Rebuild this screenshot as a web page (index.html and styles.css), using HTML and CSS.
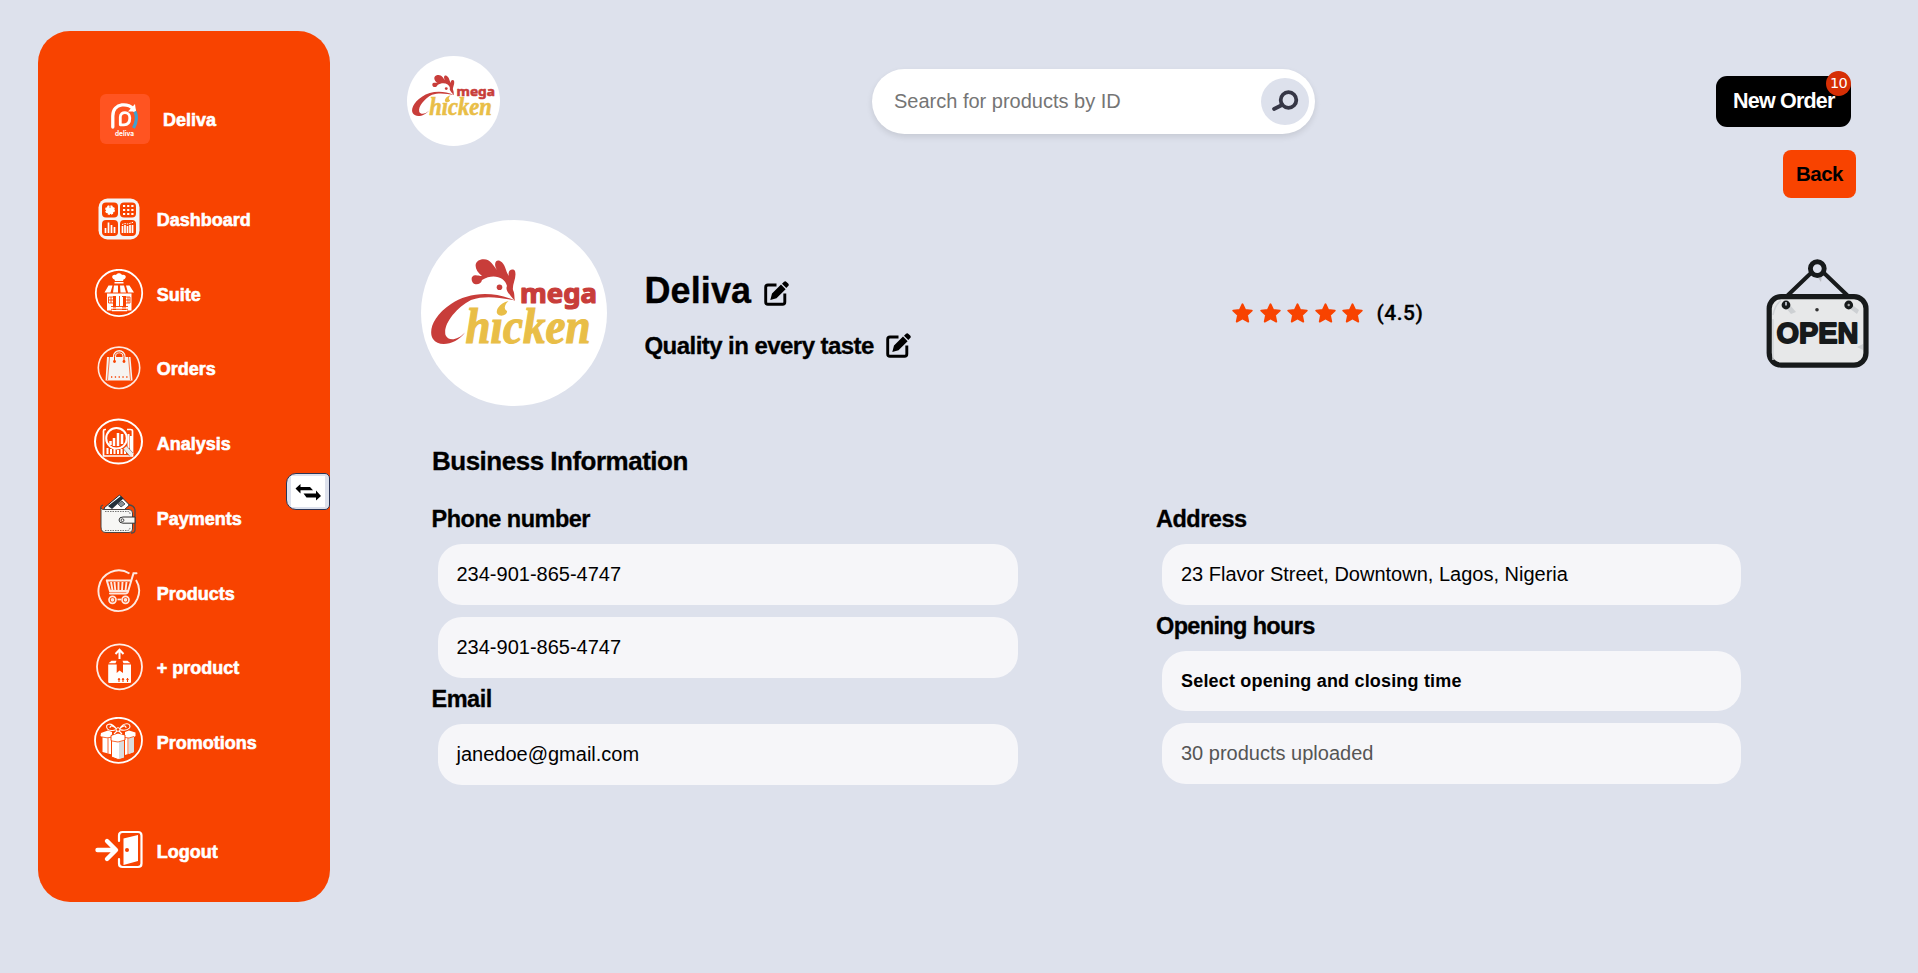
FILE: index.html
```html
<!DOCTYPE html>
<html lang="en">
<head>
<meta charset="utf-8">
<title>Deliva</title>
<link rel="stylesheet" href="styles.css">
</head>
<body>
<svg class="defs" width="0" height="0">
  <symbol id="mega" class="mega" viewBox="0 0 186 186" preserveAspectRatio="none">
    <ellipse cx="93" cy="93" rx="93" ry="93" fill="#fff"/>
    <g fill="#c83d3a">
      <path d="M94 80.500C70 70 46 73 30 84C12 96 7 111 12 119C18 128 36 124 44 112.500C36 121 27 121 24.500 115C22 104 35 88 50 80C65 75 80 78 94 80.500Z"/>
      <path d="M52 63C49 59 51 54 56 55.500C58 55.500 59 56 61 56C53 50 52 41 61 39.300C69 38 72 45 76 50C72 44 75 39 79 41C85 44 84 51 88 56C86 50 92 48 94 51C96 58 91 64 92 70C94 74 93 77 94 81C88 74 84 70 86 66C84 57 72 53 61 60C60 65 54 65 52 63Z"/>
      <circle cx="78.500" cy="67.300" r="2.800"/>
      <text x="99" y="82.500" textLength="77" lengthAdjust="spacingAndGlyphs" class="mega-top">mega</text>
    </g>
    <g fill="#e9be47">
      <path d="M87.500 81C78 83 74 91 76.500 94C80 98 87 94 86 91C82 89 84 84 87.500 81Z"/>
      <text x="44.500" y="122.500" textLength="125" lengthAdjust="spacingAndGlyphs" class="mega-bottom">h&#305;cken</text>
    </g>
  </symbol>
  <symbol id="edit" viewBox="0 0 25 25">
    <path d="M12.500 4H4Q1.700 4 1.700 6.300V21Q1.700 23.300 4 23.300H18.500Q20.800 23.300 20.800 21V12.500" fill="none" stroke="#000" stroke-width="2.900"/>
    <path d="M6.300 19L8 12.600L17 3.600L21.600 8.200L12.500 17.300ZM18 2.800L20 .800Q21.300-.300 22.500.900L24.200 2.600Q25.400 3.900 24.200 5.100L22.300 7.100Z"/>
  </symbol>
  <symbol id="star" viewBox="0 0 21 20">
    <path d="M10.500 1.200L13.200 6.800L19.800 7.600L15 12.100L16.300 18.600L10.500 15.500L4.700 18.600L6 12.100L1.200 7.600L7.800 6.800Z" fill="#f84300" stroke="#f84300" stroke-width="1.800" stroke-linejoin="round"/>
  </symbol>
</svg>

<div class="page">
  <aside class="sidebar">
    <div class="brand">
      <svg class="brand-logo" width="50" height="50" viewBox="0 0 50 50">
        <rect width="50" height="50" rx="6" fill="#ff5421"/>
        <path d="M12.800 33V22C12.800 8 30 8.500 34 16" fill="none" stroke="#fff" stroke-width="3.300" stroke-linecap="round"/>
        <path d="M28 17.500L36 17.500L35 10Z" fill="#fff"/>
        <path d="M20.300 30.800V23C20.300 17 29.800 17 29.800 24C29.800 29 27 30.800 24 30.800Z" fill="none" stroke="#fff" stroke-width="2.800" stroke-linejoin="round"/>
        <path d="M35 17.500Q38.500 25 33.500 34" fill="none" stroke="#3fa0cf" stroke-width="3.200"/>
        <text x="15" y="42" textLength="19" lengthAdjust="spacingAndGlyphs" class="brand-mini">deliva</text>
      </svg>
      <span>Deliva</span>
    </div>
    <nav class="nav">
      <a class="nav-item">
        <svg class="icon" viewBox="0 0 50 50">
          <rect x="4.500" y="4.500" width="41" height="41" rx="9" fill="#f4f4f6"/>
          <g fill="#f84300"><rect x="8" y="8.500" width="16" height="15" rx="4"/><rect x="26" y="8.500" width="16" height="15" rx="4"/><rect x="8" y="26" width="16" height="16" rx="4"/><rect x="26" y="26" width="16" height="16" rx="4"/></g>
          <circle cx="16" cy="16" r="4" fill="#fff" stroke="#fff" stroke-width="1.800" stroke-dasharray="2 1.140"/>
          <path d="M16 12v2" stroke="#f84300" stroke-width=".800"/>
          <path d="M29 12h10.500M29 16h10.500M29 20h10.500" stroke="#fff" stroke-width="2.200" stroke-dasharray="2.200 1.950"/>
          <path d="M11.500 39v-5M14.500 39V28.500M17.500 39v-8M20.500 39v-6M28.500 39v-7M31 39v-8M33.500 39v-7M36 39v-8M38.500 39v-8" stroke="#fff" stroke-width="1.700"/>
          <path d="M28 30.500l3-1 3 .500 6-2" stroke="#fff" stroke-dasharray="1.500 1" fill="none"/>
        </svg><span>Dashboard</span></a>
      <a class="nav-item">
        <svg class="icon" viewBox="0 0 50 50">
          <circle cx="25" cy="24" r="23.200" fill="none" stroke="#fff" stroke-width="1.800"/>
          <g fill="#fff">
            <path d="M20.500 10.500C16 8.500 19 4.500 22 6C23 3.500 27 3.500 28 6C31 4.500 34 8.500 29.500 10.500L29 12H21ZM20.500 13h9v1.500h-9Z"/>
            <path d="M14.500 16.500h4l-2 7h-6ZM20 16.500h4v7h-5ZM26 16.500h4l2 7h-5.500ZM32 16.500h3.500l4.500 7h-6Z"/>
            <path d="M13 24.500h24.500v17H32V27h-4v14.500h-6V27h-3v14.500h-6Z"/>
            <path d="M22 28h7v9h-7ZM17 38.500h17v1.200H17ZM18 41h15v1.200H18Z"/>
          </g>
          <path d="M14.500 28h5v6h-5ZM31.500 28h4.500v6h-4.500ZM17 28v6M14.500 31h5M34 28v6M31.500 31h4.500M25.500 27v10M21.500 27v10M30 27v10M17 37.500h17M17 40.300h17" stroke="#f84300" fill="none" stroke-width=".900"/>
        </svg><span>Suite</span></a>
      <a class="nav-item">
        <svg class="icon" viewBox="0 0 50 50">
          <circle cx="25" cy="24.800" r="20.700" fill="none" stroke="#ffe9e0" stroke-width="1.600"/>
          <path d="M13 14h23.500L38.500 37.500h-27Z" fill="#f6f3f1"/>
          <path d="M15.500 14L13.500 37M34.500 14L36.500 37" stroke="#f84300" stroke-width=".700"/>
          <path d="M20.500 18V13.500C20.500 7 30 7 30 13.500V18" stroke="#f6f3f1" stroke-width="3.200" fill="none"/>
          <path d="M20.500 19V13.500C20.500 7.500 30 7.500 30 13.500V19" stroke="#f84300" stroke-width="1" fill="none"/>
          <path d="M17 34h17" stroke="#f84300" stroke-width="1.300" stroke-dasharray="1.300 2.500"/>
          <circle cx="20.500" cy="18.500" r="1.400" fill="#f84300"/><circle cx="30" cy="18.500" r="1.400" fill="#f84300"/>
        </svg><span>Orders</span></a>
      <a class="nav-item">
        <svg class="icon" viewBox="0 0 50 50">
          <ellipse cx="24.500" cy="23.500" rx="23.500" ry="22.100" fill="none" stroke="#fff" stroke-width="2"/>
          <path d="M12 11.500H11Q9.500 11.500 9.500 13V38H38.500V13Q38.500 11.500 36.500 11.500H33" fill="none" stroke="#fff" stroke-width="1.700"/>
          <path d="M13.500 36v-6M17 36v-5M20.500 36v-5M24 36v-4M27.500 36v-5M31 36v-4M34.500 30V16M37 34V18" stroke="#fff" stroke-width="2"/>
          <circle cx="22.500" cy="20.300" r="10.300" fill="#f84300" stroke="#fff" stroke-width="2"/>
          <path d="M16.500 27v-4M20 28v-8M24 28V15M28 26V16" stroke="#fff" stroke-width="2.500"/>
          <path d="M31 29.500L38 37" stroke="#eee" stroke-width="4.500"/><path d="M29.500 31L36 38.500M32.500 28l6.500 7" stroke="#555" stroke-width=".500"/>
        </svg><span>Analysis</span></a>
      <a class="nav-item">
        <svg class="icon" viewBox="0 0 50 50">
          <path d="M10 15L25.500 2L35.500 12L30 17H11Z" fill="#fff" stroke="#273038" stroke-width="1"/>
          <path d="M14 13L27 3l2.500 2.500L18 16Z" fill="#22303a"/><path d="M24 11l4-3 3 3-4 3Z" fill="#8b9297" stroke="#22303a" stroke-width=".700"/>
          <path d="M9 12Q6 13 7 16M34 12Q41 12 41 18V37Q41 40 37 40" stroke="#4b4b4b" stroke-width="1.300" fill="none"/>
          <path d="M7 15Q8 17 11 16.500H35Q38.500 16.500 38.500 20V36Q38.500 39.500 35 39.500H12Q7 39.500 7 34Z" fill="#f7f7f5" stroke="#4b4542" stroke-width="1"/>
          <path d="M11 18.500H34Q36 18.500 36 21M11 37.500H34Q36 37 36 34" stroke="#555" stroke-width=".800" stroke-dasharray="1.500 1" fill="none"/>
          <path d="M41 24H29Q25 24 25 27T29 30.200H41Z" fill="#f7f7f5" stroke="#333" stroke-width="1"/><circle cx="28.500" cy="27.200" r="1.400" fill="#fff" stroke="#333" stroke-width=".900"/>
        </svg><span>Payments</span></a>
      <a class="nav-item">
        <svg class="icon" viewBox="0 0 50 50">
          <path d="M35.500 5.500A20.300 20.300 0 1 0 42 12" fill="none" stroke="#ffe9e0" stroke-width="1.900"/>
          <path d="M42.500 5.300H39.500L34 23.500Q33.500 25.500 31.500 25.500H16M13 12.500H36M12.800 12.500L16 23H34" fill="none" stroke="#ffe9e0" stroke-width="2" stroke-linecap="round"/>
          <path d="M17 14l1.500 8.500M20.500 14l.800 8.500M24.500 14v8.500M28.500 14l-.500 8.500M32.500 14l-1 8.500" stroke="#ffe9e0" stroke-width="1.900"/>
          <g fill="none" stroke="#ffe9e0" stroke-width="1.700"><circle cx="18.500" cy="31.800" r="3.500"/><circle cx="18.500" cy="31.800" r="1"/><circle cx="31.500" cy="31.800" r="3.500"/><circle cx="31.500" cy="31.800" r="1"/><path d="M23.500 31.500h3.500"/></g>
        </svg><span>Products</span></a>
      <a class="nav-item">
        <svg class="icon" viewBox="0 0 50 50">
          <circle cx="25.500" cy="24.800" r="22.500" fill="none" stroke="#ffeee8" stroke-width="1.800"/>
          <path d="M25.500 17V8M21.500 12l4-4.200 4 4.200" fill="none" stroke="#fff" stroke-width="2"/>
          <path d="M17.500 18.800h5l-1 2.500h-7ZM28.500 18.800h5l3 2.500h-7ZM14.200 22.500h8.500V31l2.800-2.500L29 31v-8.500h8V40Q37 41 36 41H15.200Q14.200 41 14.200 40Z" fill="#fffdfb"/>
          <path d="M25 40v-4M29 40v-4M33.500 40v-4" stroke="#f84300" stroke-width="1.100"/><path d="M23.500 38l1.500-2 1.500 2ZM27.500 38l1.500-2 1.500 2ZM32 38l1.500-2 1.500 2Z" fill="#f84300"/>
        </svg><span>+ product</span></a>
      <a class="nav-item">
        <svg class="icon" viewBox="0 0 50 50">
          <ellipse cx="24.500" cy="23.300" rx="23.500" ry="22.500" fill="none" stroke="#fff" stroke-width="1.800"/>
          <path d="M7 16L14 13.500L18 15L18 37.500L8.500 35V20L6.500 19ZM31 15L35 13.500L41.500 15.500V19L40 20V35L31 38Z" fill="#fff"/>
          <path d="M17 18.500L24 16L31 18V23L30 24V41L24 42.500L17.500 40V24L17 23Z" fill="#fff" stroke="#f84300" stroke-width="1"/>
          <path d="M25 25l5-1.500V40.500L25 42ZM35 21l5-1.500V35L35 37Z" fill="#d9dde0"/>
          <path d="M17 23.800l7 1.200 7-2M8 20l5 .800 4-.500M31 20.500l4 .500 5-1.500M14 21v15.500M34 21v16" stroke="#f84300" stroke-width=".800" fill="none"/>
          <path d="M23 12.500C17 4 10 7 13.500 12C16 15 20 13 23 12.500C19 8 16 8 16 11M25 12.500C30 4 38 6 35.500 11C32 15 28 13 25 12.500C29 8 32 8 32 11M24 13l-4 4M24 13l4 4" fill="none" stroke="#fff" stroke-width="1.100"/>
          <circle cx="24" cy="12.500" r="1.800" fill="#f84300" stroke="#fff"/>
        </svg><span>Promotions</span></a>
      <a class="nav-item logout">
        <svg class="icon" viewBox="0 0 50 50">
          <path d="M3.500 24H21M13 15L22 24L13 33" fill="none" stroke="#fff" stroke-width="4.400" stroke-linecap="round" stroke-linejoin="round"/>
          <path d="M25 15V9.500Q25 6 28.500 6H44Q47.500 6 47.500 9.500V37.500Q47.500 41 44 41H28.500Q25 41 25 37.500V33" fill="none" stroke="#fff" stroke-width="2.200" stroke-linecap="round"/>
          <path d="M29.500 12.500L44 9V35L29.500 39Z" fill="#fff"/><circle cx="33" cy="24" r="2" fill="#f84300"/>
        </svg><span>Logout</span></a>
    </nav>
    <button class="toggle" aria-label="Toggle menu">
      <svg width="34" height="31" viewBox="0 0 34 31"><rect width="34" height="31" fill="#fff"/><path d="M4.500 12.500L9.500 8V11H19L22 14.300H9.500V17.500ZM30 20L25 24.500V21.500H15.500L12.500 17.500H25V14.500Z"/></svg>
    </button>
  </aside>

  <main class="main">
    <header class="header">
      <svg class="header-logo" preserveAspectRatio="none"><use href="#mega" width="93" height="90"/></svg>
      <div class="search">
        <input class="search-input" type="text" placeholder="Search for products by ID">
        <span class="search-btn"><svg width="48" height="47" viewBox="0 0 48 47" fill="none" stroke="#363746" stroke-width="3.800"><circle cx="27.500" cy="22" r="7.800"/><path d="M21 27L13 31" stroke-linecap="round"/></svg></span>
      </div>
      <div class="new-order">New Order<span class="badge">10</span></div>
    </header>
    <div class="back">Back</div>

    <section class="profile">
      <svg class="avatar"><use href="#mega" width="186" height="186"/></svg>
      <div class="info">
        <div class="name"><span>Deliva</span><svg class="edit edit-name"><use href="#edit"/></svg></div>
        <div class="motto"><span>Quality in every taste</span><svg class="edit"><use href="#edit"/></svg></div>
      </div>
      <div class="rating">
        <svg class="star"><use href="#star"/></svg><svg class="star"><use href="#star"/></svg><svg class="star"><use href="#star"/></svg><svg class="star"><use href="#star"/></svg><svg class="star"><use href="#star"/></svg>
        <span class="score">(4.5)</span>
      </div>
      <svg class="sign" viewBox="0 0 103 110">
        <path d="M45 14L21 37M58 14L82 37" stroke="#171a1b" stroke-width="4"/>
        <path d="M50 16l5 7 1-8Z" fill="#b9bcc1"/>
        <circle cx="51.300" cy="9.600" r="6.900" fill="#dde1ec" stroke="#171a1b" stroke-width="4.900"/>
        <rect x="3.200" y="37.600" width="96.800" height="68.500" rx="12" fill="#e7e8e9" stroke="#171a1b" stroke-width="5.200"/>
        <path d="M7 56Q9 46 15 41.500M7 60V101" stroke="#cfd2d6" fill="none" stroke-width="1.500"/>
        <path d="M20 49l5 6 5-2-7-8ZM83 49l8 6 2-4-8-6ZM91 88l6 3V85Z" fill="#cdd0d3"/>
        <circle cx="20" cy="46" r="4.400" fill="#171a1b"/><path d="M20 43v3.500" stroke="#dde1ec" stroke-width="1.500"/>
        <circle cx="82.700" cy="46" r="4.400" fill="#171a1b"/><circle cx="82.700" cy="46" r="1.200" fill="#aaa"/>
        <circle cx="51" cy="50.700" r="1.800" fill="#333"/>
        <text x="10.500" y="83.500" textLength="82" lengthAdjust="spacingAndGlyphs" class="sign-text">OPEN</text>
      </svg>
    </section>

    <h2 class="section-title">Business Information</h2>
    <section class="fields">
      <div class="column">
        <h3 class="label">Phone number</h3>
        <div class="field">234-901-865-4747</div>
        <div class="field">234-901-865-4747</div>
        <h3 class="label">Email</h3>
        <div class="field">janedoe@gmail.com</div>
      </div>
      <div class="column">
        <h3 class="label">Address</h3>
        <div class="field">23 Flavor Street, Downtown, Lagos, Nigeria</div>
        <h3 class="label label-hours">Opening hours</h3>
        <div class="field field-hours">Select opening and closing time</div>
        <div class="field field-muted">30 products uploaded</div>
      </div>
    </section>
  </main>
</div>
</body>
</html>
```
FILE: styles.css
```css
* { box-sizing: border-box; }
body {
  margin: 0;
  background: #dde1ec;
  color: #000;
  font-family: "Liberation Sans", Arial, sans-serif;
}
.defs { position: absolute; }
svg { display: block; flex: none; }
.page { display: flex; height: 973px; overflow: hidden; padding: 31px 62px 0 38px; }

.sidebar {
  position: relative;
  flex: none;
  width: 292px;
  height: 871px;
  padding: 63px 0 0 56px;
  border-radius: 32px;
  background: #f84300;
  color: #fff;
  font-size: 18px;
  font-weight: 700;
  -webkit-text-stroke: 0.6px #fff;
}
.brand { display: flex; align-items: center; gap: 13px; padding-left: 6px; }
.brand span { padding-top: 2px; }
.brand-logo { -webkit-text-stroke: 0; }
.brand-mini { font: 700 7px Inter, sans-serif; fill: #fff; }
.nav { display: flex; flex-direction: column; padding-top: 37.5px; }
.nav-item { display: flex; align-items: center; gap: 12.7px; height: 74.75px; }
.nav-item span { padding-top: 3px; }
.icon { width: 50px; height: 50px; }
.logout { margin-top: 34.5px; }
.toggle {
  position: absolute;
  right: 0;
  top: 442px;
  width: 44px;
  height: 37px;
  display: flex;
  align-items: center;
  justify-content: center;
  padding: 0;
  border: 1px solid #2b3556;
  border-radius: 10px 5px 5px 10px;
  background: #dde1ec;
}

.main { flex: 1; display: flex; flex-direction: column; padding-top: 25px; }
.header { display: flex; align-items: center; height: 90px; padding-left: 77px; }
.header-logo { width: 93px; height: 90px; overflow: visible; }
.search {
  display: flex;
  align-items: center;
  width: 443px;
  height: 65px;
  margin-left: 372px;
  padding: 0 6px 0 22px;
  border-radius: 33px;
  background: #fff;
  box-shadow: 0 3px 6px rgba(0, 0, 0, 0.1);
}
.search-input {
  flex: 1;
  min-width: 0;
  padding: 0;
  border: 0;
  outline: 0;
  background: none;
  font: 20px "Liberation Sans", Arial, sans-serif;
}
.search-input::placeholder { color: #757575; }
.search-btn { width: 48px; height: 47px; border-radius: 50%; background: #dde1ec; }
.new-order {
  position: relative;
  width: 135px;
  height: 51px;
  margin-left: 401px;
  padding-left: 17px;
  border-radius: 11px;
  background: #000;
  color: #fff;
  font-size: 21.5px;
  font-weight: 700;
  line-height: 51px;
  letter-spacing: -0.8px;
  white-space: nowrap;
}
.badge {
  position: absolute;
  top: -5px;
  right: 0;
  width: 25px;
  height: 25px;
  border-radius: 50%;
  background: #d62f05;
  font: 14.5px/25px "DejaVu Sans", sans-serif;
  letter-spacing: -0.8px;
  text-align: center;
}
.back {
  align-self: flex-end;
  width: 73px;
  height: 48px;
  margin-top: 4px;
  border-radius: 8px;
  background: #f84300;
  font-size: 20.5px;
  font-weight: 700;
  line-height: 48px;
  letter-spacing: -0.5px;
  text-align: center;
}

.profile { display: flex; align-items: center; height: 186px; margin: 21.5px -13px 0 91px; }
.avatar { width: 186px; height: 186px; overflow: visible; }
.info { width: 588px; padding-left: 37.5px; padding-top: 4px; font-weight: 700; -webkit-text-stroke: 0.3px #000; }
.name, .motto { display: flex; align-items: center; white-space: nowrap; }
.name { gap: 13px; font-size: 36px; line-height: 44px; letter-spacing: 0.1px; }
.motto { gap: 12.5px; margin-top: 18px; font-size: 24px; line-height: 30px; letter-spacing: -0.55px; }
.edit { width: 25px; height: 25px; }
.edit-name { margin-top: 6px; }
.rating { display: flex; align-items: center; gap: 6.5px; margin-left: 37px; }
.star { width: 21px; height: 20px; }
.score { margin-left: 7px; font: 500 21px Roboto, sans-serif; letter-spacing: 0.5px; -webkit-text-stroke: 0.3px #000; }
.sign { width: 103px; height: 110px; margin-top: 3px; margin-left: auto; }
.mega { overflow: visible; }
.mega-top { font: 700 27px "Noto Sans", sans-serif; stroke: #c83d3a; stroke-width: 1.2; stroke-linejoin: round; }
.mega-bottom { font: italic 700 50px "Liberation Serif", serif; stroke: #e9be47; stroke-width: 1.2; }
.sign-text { font: 700 30px "Liberation Sans", sans-serif; fill: #171a1b; stroke: #171a1b; stroke-width: 1.8; stroke-linejoin: round; }

.section-title { margin: 39.5px 0 0 102px; font-size: 26px; line-height: 32px; letter-spacing: -0.5px; -webkit-text-stroke: 0.3px #000; }
.fields { display: grid; grid-template-columns: 586px 585px; column-gap: 138.5px; margin: 27.5px 0 0 101.5px; }
.column { display: flex; flex-direction: column; }
.label { margin: 0 0 11.5px; font-size: 23.5px; line-height: 28px; letter-spacing: -0.5px; -webkit-text-stroke: 0.3px #000; }
.field {
  height: 61px;
  margin-left: 6px;
  padding-left: 19px;
  border-radius: 24px;
  background: #f6f6f9;
  font-size: 20px;
  line-height: 60px;
}
.field + .field { margin-top: 12px; }
.field + .label { margin-top: 6.5px; }
.label-hours { letter-spacing: -0.65px; }
.field-hours { height: 60px; font-size: 18px; font-weight: 700; line-height: 61px; letter-spacing: 0.18px; }
.field-muted { color: #555; }
```
